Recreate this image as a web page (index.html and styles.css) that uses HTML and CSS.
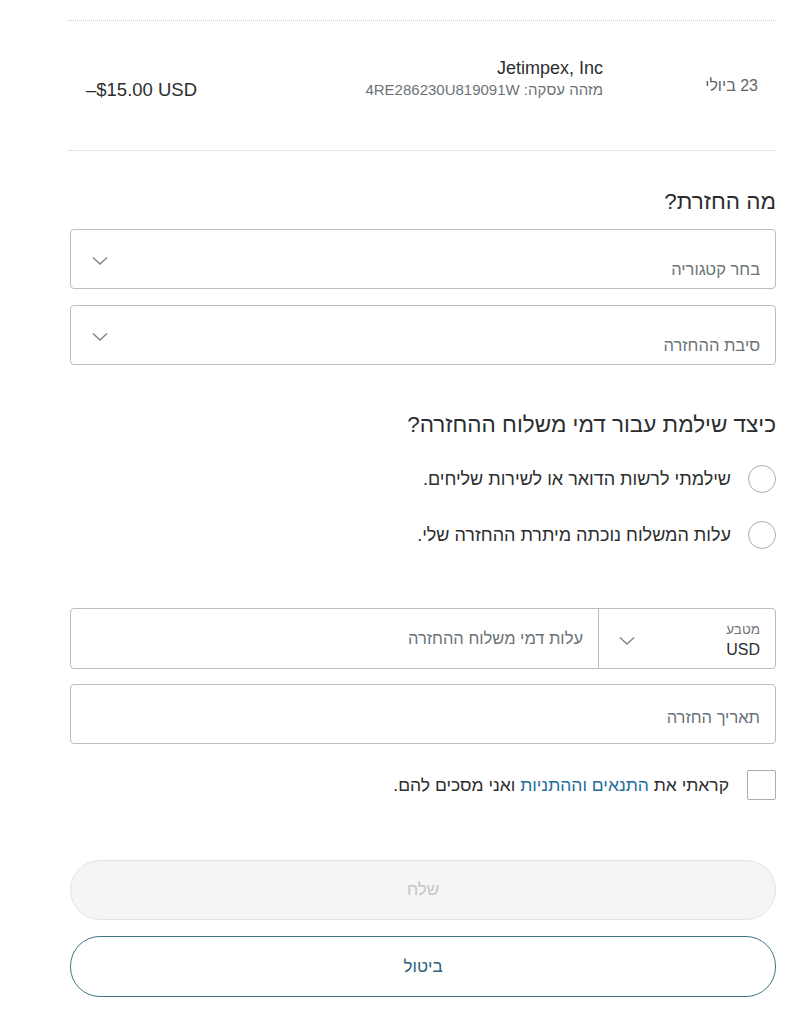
FILE: index.html
```html
<!DOCTYPE html>
<html lang="he" dir="rtl">
<head>
<meta charset="utf-8">
<title>החזרה</title>
<link rel="stylesheet" href="styles.css">
</head>
<body>
<div class="page">
  <div class="txn">
    <div class="txn-date">23 ביולי</div>
    <div class="txn-merchant">
      <div class="txn-name">Jetimpex, Inc</div>
      <div class="txn-id">מזהה עסקה: 4RE286230U819091W</div>
    </div>
    <div class="txn-amount" dir="ltr">–$15.00 USD</div>
  </div>

  <h2 class="heading heading-first">מה החזרת?</h2>
  <div class="select">
    <span class="field-label">בחר קטגוריה</span>
    <svg class="chev" width="16" height="10" viewBox="0 0 16 10"><path d="M1 1.5 L8 8 L15 1.5" fill="none" stroke="#7a8388" stroke-width="1.3"/></svg>
  </div>
  <div class="select">
    <span class="field-label">סיבת ההחזרה</span>
    <svg class="chev" width="16" height="10" viewBox="0 0 16 10"><path d="M1 1.5 L8 8 L15 1.5" fill="none" stroke="#7a8388" stroke-width="1.3"/></svg>
  </div>

  <h2 class="heading heading-second">כיצד שילמת עבור דמי משלוח ההחזרה?</h2>
  <div class="radios">
    <label class="radio-row"><span class="radio"></span><span>שילמתי לרשות הדואר או לשירות שליחים.</span></label>
    <label class="radio-row"><span class="radio"></span><span>עלות המשלוח נוכתה מיתרת ההחזרה שלי.</span></label>
  </div>

  <div class="cost-field">
    <div class="currency">
      <div class="currency-text">
        <span class="currency-label">מטבע</span>
        <span class="currency-value">USD</span>
      </div>
      <svg class="chev" width="16" height="10" viewBox="0 0 16 10"><path d="M1 1.5 L8 8 L15 1.5" fill="none" stroke="#7a8388" stroke-width="1.3"/></svg>
    </div>
    <div class="cost-input"><span class="field-label-mid">עלות דמי משלוח ההחזרה</span></div>
  </div>

  <div class="text-field"><span class="field-label">תאריך החזרה</span></div>

  <label class="check-row">
    <span class="checkbox"></span>
    <span>קראתי את <a class="link" href="#">התנאים וההתניות</a> ואני מסכים להם.</span>
  </label>

  <div class="btn btn-disabled">שלח</div>
  <div class="btn btn-outline">ביטול</div>
</div>
</body>
</html>
```

FILE: styles.css
```css
* { box-sizing: border-box; }
html, body { margin: 0; padding: 0; background: #fff; }
body {
  font-family: "Liberation Sans", "DejaVu Sans", sans-serif;
  color: #2c2e2f;
  width: 803px;
}
.page {
  margin: 0 27px 0 70px;
  padding-top: 20px;
}
.txn {
  display: flex;
  align-items: flex-start;
  border-top: 1px dotted #c9cdd0;
  border-bottom: 1px dotted #c9cdd0;
  margin: 0 0 0 -2px;
  padding: 0 18px;
  height: 131px;
}
.txn-date {
  width: 155px;
  margin-top: 55px;
  font-size: 16px;
  line-height: 20px;
  color: #5f666a;
}
.txn-merchant { flex: 1; margin-top: 37px; }
.txn-name { font-size: 18px; color: #2c2e2f; line-height: 21px; }
.txn-id { font-size: 15px; color: #6c7378; line-height: 21px; }
.txn-amount { font-size: 18.5px; line-height: 22px; margin-top: 58px; color: #2c2e2f; }

.heading {
  margin: 0;
  font-weight: normal;
  font-size: 22.5px;
  line-height: 26px;
  color: #2c2e2f;
}
.heading-first { margin-top: 38px; margin-bottom: 14px; }
.heading-second { margin-top: 47px; margin-bottom: 15px; }

.select, .text-field {
  height: 60px;
  border: 1px solid #b9bec1;
  border-radius: 4px;
  display: flex;
  justify-content: space-between;
  align-items: flex-end;
  padding: 0 15px 9px 21px;
  position: relative;
  margin-bottom: 16px;
}
.select .chev { align-self: flex-start; margin-top: 26px; }
.field-label { font-size: 16.5px; color: #6c7378; line-height: 20px; }
.text-field { align-items: center; padding: 6px 15px 0 15px; }

.radios { display: flex; flex-direction: column; gap: 28px; padding-top: 12px; }
.radio-row {
  display: flex;
  align-items: center;
  gap: 17px;
  font-size: 18px;
  line-height: 28px;
  color: #2c2e2f;
}
.radio {
  width: 28px;
  height: 28px;
  border: 1px solid #a9aeb1;
  border-radius: 50%;
  flex: none;
}

.cost-field {
  margin-top: 59px;
  height: 61px;
  border: 1px solid #b9bec1;
  border-radius: 4px;
  display: flex;
  margin-bottom: 15px;
}
.currency {
  width: 177px;
  border-left: 1px solid #b9bec1;
  display: flex;
  justify-content: space-between;
  align-items: center;
  padding: 0 15px 0 20px;
}
.currency .chev { margin-top: 4px; }
.currency-text { display: flex; flex-direction: column; padding-top: 4px; }
.currency-label { font-size: 13.5px; color: #6c7378; line-height: 18px; }
.currency-value { font-size: 16px; color: #2c2e2f; line-height: 22px; }
.cost-input {
  flex: 1;
  display: flex;
  align-items: center;
  padding: 0 15px 0 15px;
}
.field-label-mid { font-size: 16.5px; color: #6c7378; }

.check-row {
  display: flex;
  align-items: center;
  gap: 18px;
  margin-top: 26px;
  font-size: 17.5px;
  color: #2c2e2f;
}
.checkbox {
  width: 29px;
  height: 30px;
  border: 1px solid #a9aeb1;
  border-radius: 2px;
  flex: none;
}
.link { color: #1f6f9c; text-decoration: none; }

.btn {
  height: 60px;
  border-radius: 30px;
  display: flex;
  align-items: center;
  justify-content: center;
  font-size: 17px;
}
.btn-disabled {
  margin-top: 60px;
  background: #f5f5f5;
  border: 1px solid #e3e3e3;
  color: #c4c6c8;
}
.btn-outline {
  margin-top: 16px;
  height: 61px;
  background: #fff;
  border: 1.5px solid #3f7587;
  color: #2d5f7a;
}
```
